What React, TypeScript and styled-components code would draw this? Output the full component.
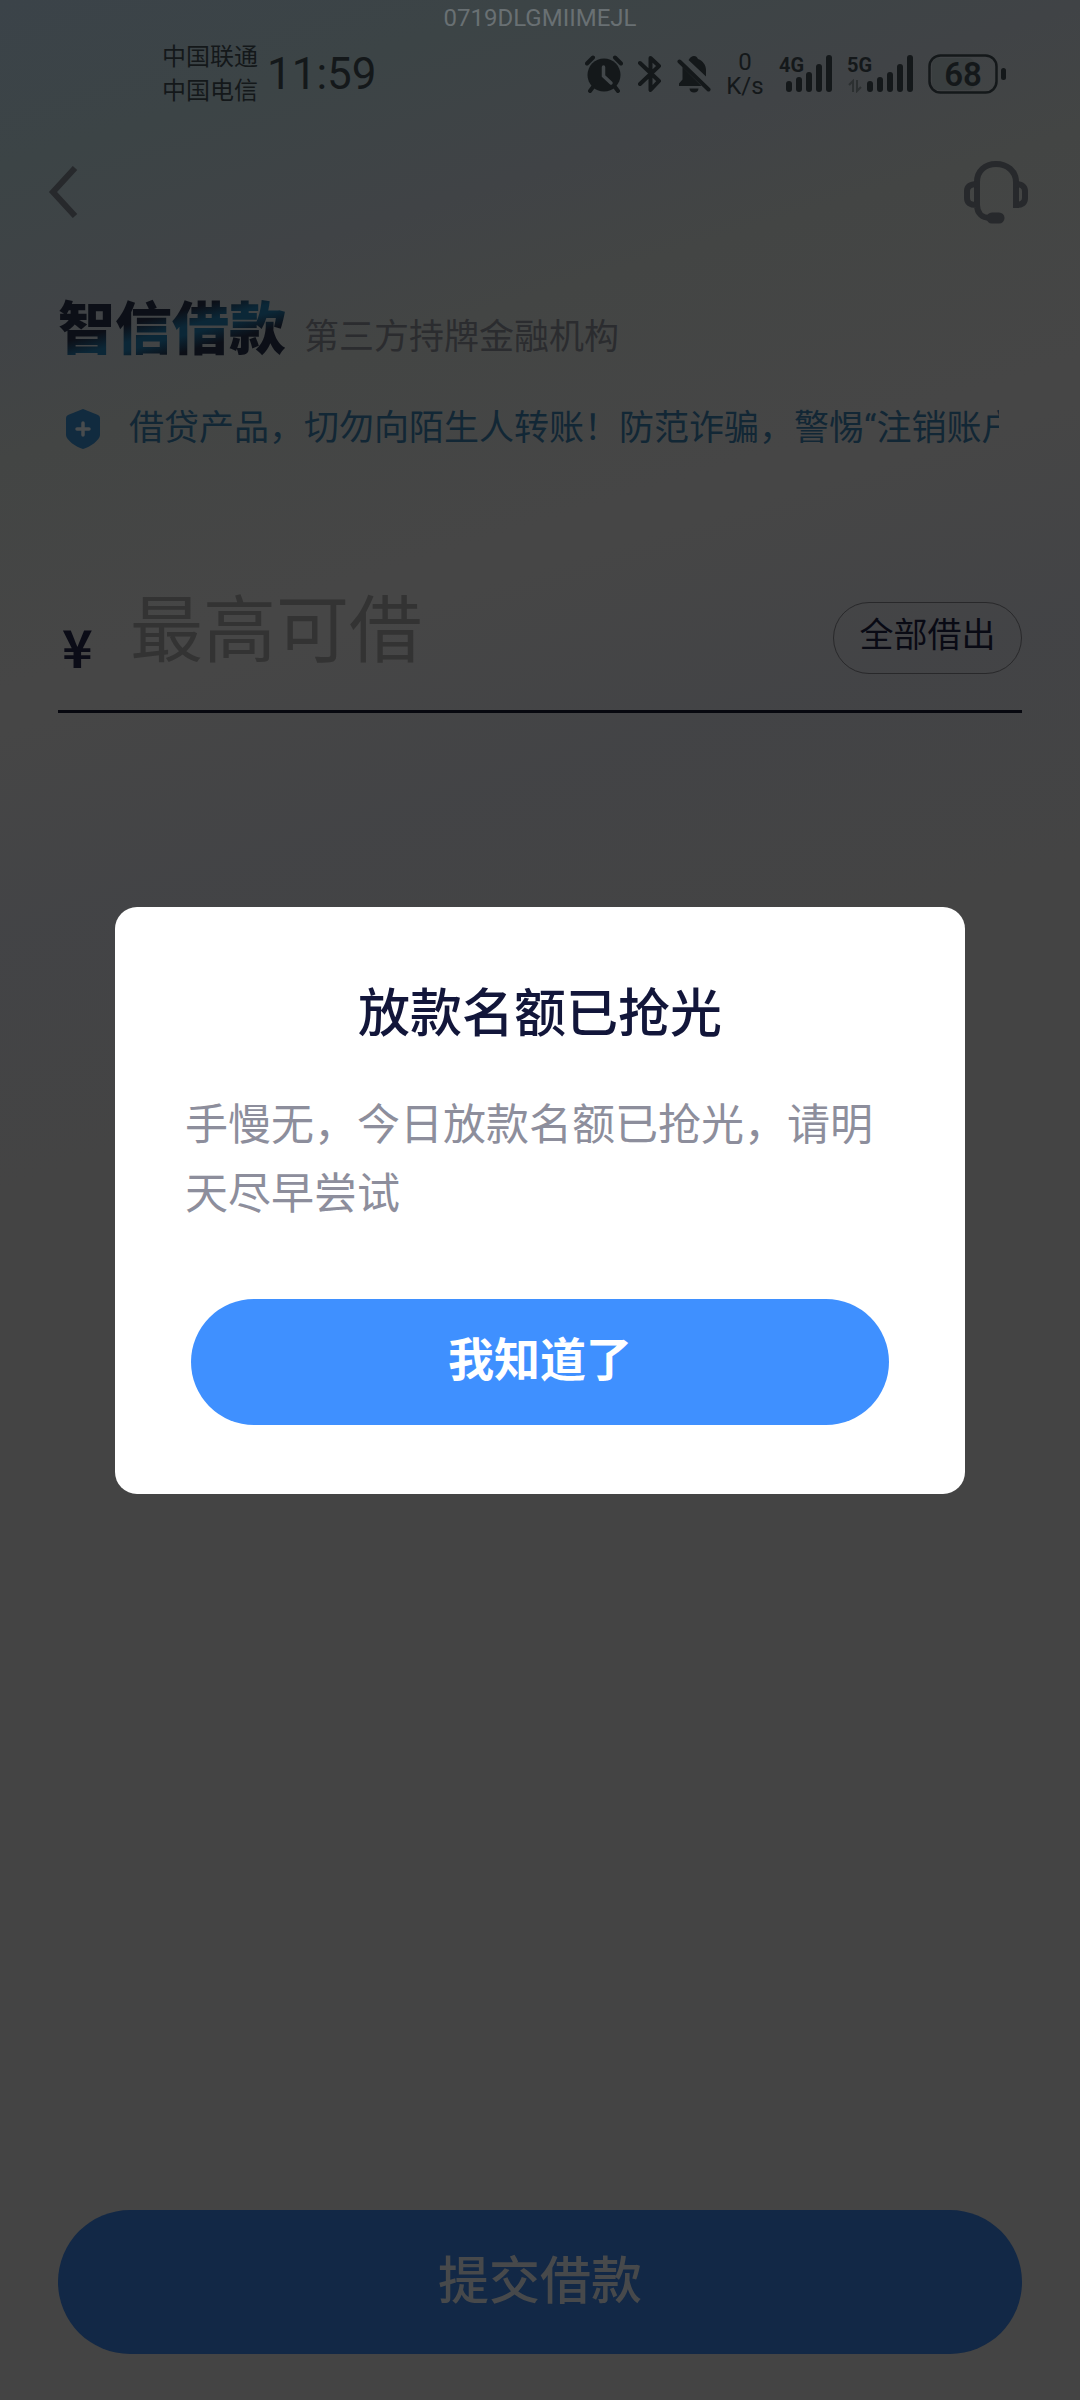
import React from 'react';
import styled, { createGlobalStyle } from 'styled-components';

const cjk = '"Noto Sans CJK SC", sans-serif';

const GlobalStyle = createGlobalStyle`
  * { box-sizing: border-box; }
  html, body { margin: 0; padding: 0; }
  body { background: #444444; font-family: Roboto, ${cjk}; }
  button, input { font-family: inherit; margin: 0; }
`;

const Screen = styled.div`
  min-height: 100vh;
  display: flex;
  flex-direction: column;
  background:
    linear-gradient(163deg, rgba(68, 68, 68, 0) 0, rgba(68, 68, 68, 0) 700px, rgba(66, 67, 70, 0.8) 900px, #444444 1140px),
    linear-gradient(163deg, #3b4349 0, #3c4446 160px, #404346 320px, #434544 440px, #464646 660px, #464646 100%);
`;

const Watermark = styled.div`
  height: 36px;
  padding-top: 3px;
  text-align: center;
  font-size: 24px;
  line-height: 30px;
  color: #697073;
`;

const StatusBar = styled.div`
  height: 76px;
  padding: 0 74px 0 162px;
  display: flex;
  align-items: center;
  justify-content: space-between;
  color: #14181a;
`;

const StatusGroup = styled.div<{ $gap: number }>`
  display: flex;
  align-items: center;
  gap: ${(p) => p.$gap}px;
`;

const Carriers = styled.div`
  font-size: 24px;
  line-height: 34px;
`;

const Clock = styled.time`
  font-size: 44px;
  line-height: 52px;
`;

const Speed = styled.div`
  width: 38px;
  text-align: center;
  font-size: 24px;
  line-height: 24px;
`;

const NavBar = styled.header`
  height: 160px;
  padding: 0 51px 0 47px;
  display: flex;
  align-items: center;
  justify-content: space-between;
`;

const IconButton = styled.button`
  display: flex;
  padding: 0;
  border: 0;
  background: none;
  color: #27292c;
`;

const Content = styled.main`
  flex: 1;
  display: flex;
  flex-direction: column;
  padding: 0 58px;
`;

const Heading = styled.div`
  height: 115px;
  display: flex;
  align-items: center;
  gap: 18px;
`;

const Brand = styled.h1`
  margin: 0;
  font-size: 57px;
  line-height: 80px;
  font-weight: 900;
  color: transparent;
  background: linear-gradient(165deg, #0c0f17 38%, #0b2737 50%, #0b2737 56%, #0c0f17 68%);
  background-clip: text;
  -webkit-background-clip: text;
`;

const Tagline = styled.span`
  padding-top: 16px;
  font-size: 35px;
  line-height: 48px;
  color: #2b2c2f;
`;

const Notice = styled.div`
  height: 84px;
  padding: 0 23px 0 7px;
  display: flex;
  align-items: center;
  gap: 28px;
  color: #122735;
`;

const NoticeText = styled.p`
  flex: 1;
  min-width: 0;
  margin: 0;
  overflow: hidden;
  white-space: nowrap;
  font-size: 35px;
  line-height: 52px;
`;

const AmountRow = styled.div`
  height: 242px;
  padding-bottom: 28px;
  display: flex;
  align-items: flex-end;
  border-bottom: 3px solid #07080f;
`;

const Currency = styled.label`
  width: 72px;
  padding-left: 4px;
  font-family: ${cjk};
  font-size: 52px;
  line-height: 72px;
  font-weight: 700;
  color: #0b0c17;
`;

const AmountInput = styled.input`
  flex: 1;
  min-width: 0;
  height: 104px;
  padding: 2px 0 0;
  border: 0;
  outline: 0;
  background: none;
  font-size: 73px;
  color: #0b0c17;
  &::placeholder { color: #333333; opacity: 1; }
`;

const AllButton = styled.button`
  width: 189px;
  height: 72px;
  margin-bottom: 8px;
  padding: 0 0 12px;
  border: 1px solid #28282a;
  border-radius: 36px;
  background: none;
  font-size: 34px;
  color: #090a14;
`;

const Footer = styled.footer`
  padding: 0 58px 46px;
`;

const SubmitButton = styled.button`
  width: 100%;
  height: 144px;
  padding: 0 0 10px;
  border: 0;
  border-radius: 72px;
  background: #122846;
  font-size: 51px;
  font-weight: 500;
  color: #47494b;
`;

const Overlay = styled.div`
  position: fixed;
  inset: 0;
  display: flex;
  align-items: center;
  justify-content: center;
`;

const Dialog = styled.section`
  width: calc(100% - 230px);
  padding: 70px 70px 69px;
  border-radius: 22px;
  background: #ffffff;
`;

const DialogTitle = styled.h2`
  margin: 0 0 38px;
  text-align: center;
  font-size: 52px;
  line-height: 76px;
  font-weight: 500;
  color: #12163a;
`;

const DialogText = styled.p`
  margin: 0 0 70px;
  font-size: 43px;
  line-height: 69px;
  color: #8d8e9c;
`;

const DialogActions = styled.div`
  padding: 0 6px;
`;

const ConfirmButton = styled.button`
  width: 100%;
  height: 126px;
  padding: 0 0 12px;
  border: 0;
  border-radius: 63px;
  background: #3f90ff;
  font-size: 46px;
  font-weight: 700;
  color: #ffffff;
`;

const AlarmIcon = () => (
  <svg width="38" height="38" viewBox="0 0 38 38" fill="currentColor" aria-hidden="true">
    <circle cx="19" cy="20" r="16.5" />
    <path d="M2 8.500 8 2.500M36 8.500 30 2.500M8 32 5 36M30 32 33 36" stroke="currentColor" strokeWidth="4" strokeLinecap="round" />
    <path d="M18.500 12v9l7.500 7" fill="none" stroke="#42474a" strokeWidth="3.500" strokeLinecap="round" />
  </svg>
);

const BluetoothIcon = () => (
  <svg width="24" height="38" viewBox="0 0 24 38" fill="none" stroke="currentColor" strokeWidth="4" strokeLinecap="round" strokeLinejoin="round" aria-hidden="true">
    <path d="M2 8 21 26 12.500 35V3L21 11 2 29" />
  </svg>
);

const MutedBellIcon = () => (
  <svg width="34" height="38" viewBox="0 0 34 38" fill="currentColor" aria-hidden="true">
    <path d="M12 4.500C13 2.500 15 1 17 1s3 1 4 3c5 2 8 6 8 11v6.500L11.500 5z" />
    <path d="M5.500 12 24.500 31H2v-2.500l3.500-4z" />
    <path d="M12.500 33.500h9c0 2.500-2 4-4.500 4s-4.500-1.500-4.500-4z" />
    <path d="M2.500 6.500 31.500 34.500" stroke="currentColor" strokeWidth="4" strokeLinecap="round" />
  </svg>
);

const Signal = styled.div`
  display: flex;
  align-items: flex-end;
`;

const NetworkColumn = styled.div<{ $wide?: boolean }>`
  width: ${(p) => (p.$wide ? 20 : 7)}px;
  height: 38px;
  display: flex;
  flex-direction: column;
  justify-content: space-between;
  font-size: 20px;
  line-height: 20px;
  font-weight: 700;
`;

const SignalIcon = ({ label, data }: { label: string; data?: boolean }) => (
  <Signal>
    <NetworkColumn $wide={data}>
      <span>{label}</span>
      {data && (
        <svg width="16" height="14" viewBox="0 0 16 14" fill="none" stroke="#2c3031" strokeWidth="2" aria-hidden="true">
          <path d="M6 13V2L2 6M10 1v11l4-4" />
        </svg>
      )}
    </NetworkColumn>
    <svg width="46" height="38" viewBox="0 0 46 38" fill="currentColor" aria-hidden="true">
      {[11, 15, 20, 28, 37].map((h, i) => (
        <rect key={h} x={i * 10} y={37 - h} width="6" height={h} rx="3" />
      ))}
    </svg>
  </Signal>
);

const BatteryIcon = () => (
  <svg width="78" height="40" viewBox="0 0 78 40" fill="none" aria-hidden="true">
    <rect x="4" y="4" width="43" height="32" rx="7" fill="#3a3f40" />
    <rect x="1.500" y="1.500" width="67" height="37" rx="11" stroke="currentColor" strokeWidth="2.500" />
    <rect x="73" y="14" width="5" height="12" rx="2.500" fill="currentColor" />
    <text x="35" y="32" textAnchor="middle" fontSize="33" fontWeight="600" fontFamily="Roboto, sans-serif" fill="currentColor">68</text>
  </svg>
);

const BackIcon = () => (
  <svg width="32" height="52" viewBox="0 0 32 52" fill="none" stroke="currentColor" strokeWidth="6" strokeLinejoin="miter" aria-hidden="true">
    <path d="M28 2 6 26l22 24" />
  </svg>
);

const HeadsetIcon = () => (
  <svg width="66" height="64" viewBox="0 0 66 64" fill="none" stroke="currentColor" strokeWidth="6" aria-hidden="true">
    <path d="M14 44V22C14 11 22 4 33 4s20 7 20 18v26" />
    <path d="M14 24C7 24 4 27 4 31v7c0 5 3 7 10 7v0c0 8 5 13 13 13" />
    <path d="M53 24c6 0 9 3 9 7v7c0 4-2 7-9 7" />
    <path d="M29 58h7" strokeWidth="11" strokeLinecap="round" />
  </svg>
);

const ShieldIcon = () => (
  <svg width="36" height="42" viewBox="0 0 36 42" aria-hidden="true">
    <path d="M18 1 33 7q2 1 2 3v17c0 5-10 12-17 14C11 39 1 32 1 27V10q0-2 2-3z" fill="#112b3f" />
    <path d="M18 15v12M12 21h12" stroke="#484c4e" strokeWidth="3.500" strokeLinecap="round" />
  </svg>
);

export default function App() {
  return (
    <>
      <GlobalStyle />
      <Screen>
        <Watermark>0719DLGMIIMEJL</Watermark>
        <StatusBar>
          <StatusGroup $gap={9}>
            <Carriers>
              <div>中国联通</div>
              <div>中国电信</div>
            </Carriers>
            <Clock>11:59</Clock>
          </StatusGroup>
          <StatusGroup $gap={15}>
            <AlarmIcon />
            <BluetoothIcon />
            <MutedBellIcon />
            <Speed>
              <div>0</div>
              <div>K/s</div>
            </Speed>
            <SignalIcon label="4G" />
            <SignalIcon label="5G" data />
            <BatteryIcon />
          </StatusGroup>
        </StatusBar>
        <NavBar>
          <IconButton type="button" aria-label="返回"><BackIcon /></IconButton>
          <IconButton type="button" aria-label="客服"><HeadsetIcon /></IconButton>
        </NavBar>
        <Content>
          <Heading>
            <Brand>智信借款</Brand>
            <Tagline>第三方持牌金融机构</Tagline>
          </Heading>
          <Notice>
            <ShieldIcon />
            <NoticeText>借贷产品，切勿向陌生人转账！防范诈骗，警惕“注销账户</NoticeText>
          </Notice>
          <AmountRow>
            <Currency htmlFor="amount">¥</Currency>
            <AmountInput id="amount" type="text" inputMode="decimal" placeholder="最高可借" />
            <AllButton type="button">全部借出</AllButton>
          </AmountRow>
        </Content>
        <Footer>
          <SubmitButton type="button">提交借款</SubmitButton>
        </Footer>
      </Screen>
      <Overlay>
        <Dialog role="dialog" aria-modal="true" aria-labelledby="dialog-title">
          <DialogTitle id="dialog-title">放款名额已抢光</DialogTitle>
          <DialogText>手慢无，今日放款名额已抢光，请明天尽早尝试</DialogText>
          <DialogActions>
            <ConfirmButton type="button">我知道了</ConfirmButton>
          </DialogActions>
        </Dialog>
      </Overlay>
    </>
  );
}
